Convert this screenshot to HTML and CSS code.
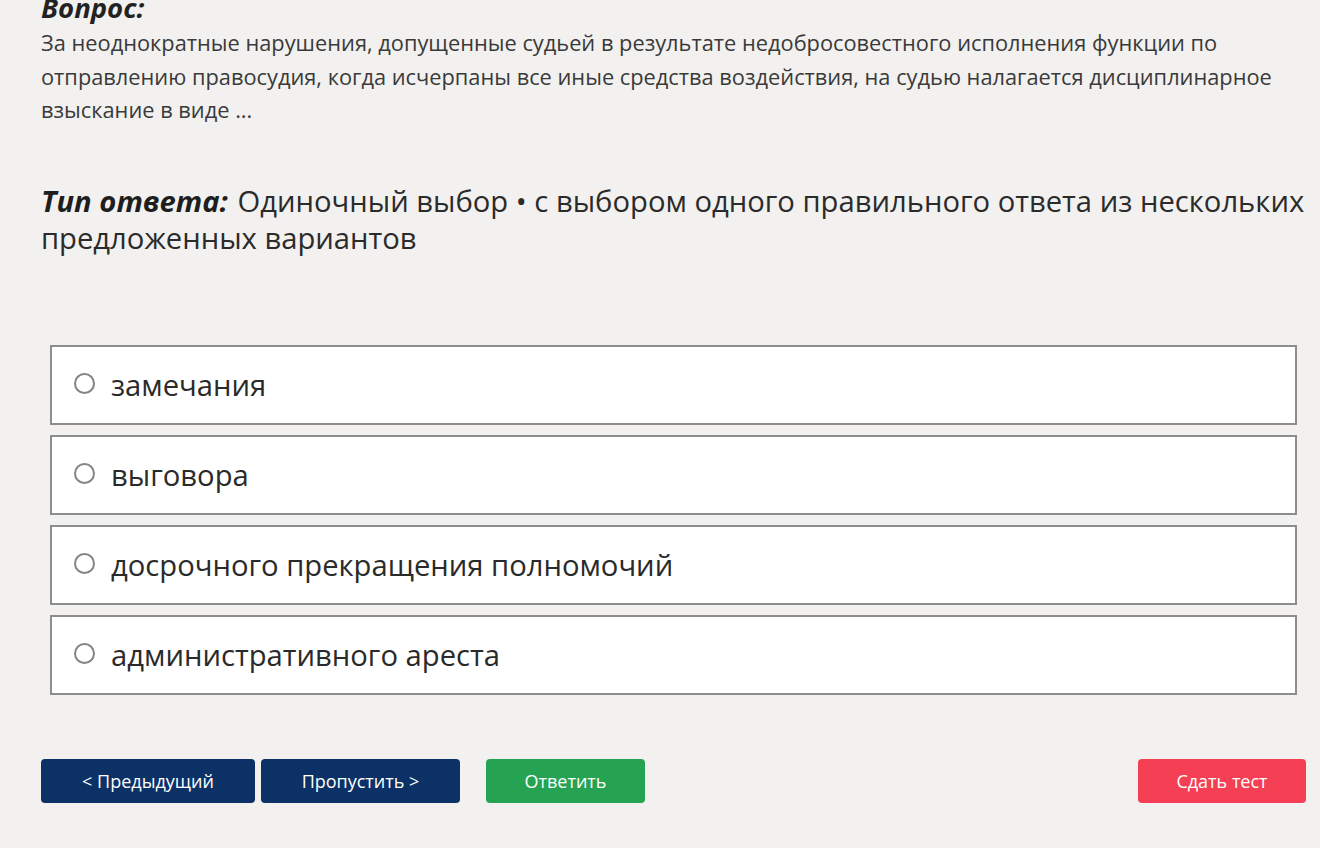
FILE: index.html
```html
<!DOCTYPE html>
<html>
    <head>
        <meta charset="utf-8">
        <title>Тест</title>
        <link rel="stylesheet" href="styles.css">
    </head>
    <body>
        <div class="page">
            <h2 class="q-title">Вопрос:</h2>
            <p class="q-text">За неоднократные нарушения, допущенные судьей в результате недобросовестного исполнения функции по отправлению правосудия, когда исчерпаны все иные средства воздействия, на судью налагается дисциплинарное взыскание в виде ...</p>

            <p class="q-type"><b><i>Тип ответа:</i></b> Одиночный выбор • с выбором одного правильного ответа из нескольких предложенных вариантов</p>

            <div class="answers">
                <label class="answer"><input type="radio" name="a"><span>замечания</span></label>
                <label class="answer"><input type="radio" name="a"><span>выговора</span></label>
                <label class="answer"><input type="radio" name="a"><span>досрочного прекращения полномочий</span></label>
                <label class="answer"><input type="radio" name="a"><span>административного ареста</span></label>
            </div>

            <div class="controls">
                <button class="btn btn-nav btn-prev">&lt; Предыдущий</button>
                <button class="btn btn-nav btn-skip">Пропустить &gt;</button>
                <button class="btn btn-ok">Ответить</button>
                <button class="btn btn-finish">Сдать тест</button>
            </div>
        </div>
    </body>
</html>
```

FILE: styles.css
```css
html, body {
    margin: 0;
    height: 100%;
    background: #f2f1ef;
}
.page {
    padding: 0 0 0 41px;
    font-family: "Open Sans", "Noto Sans", sans-serif;
    color: #2b2b2b;
}
.q-title {
    margin: -10px 0 0 0;
    font-size: 27.5px;
    line-height: 35px;
    font-style: italic;
    font-weight: 700;
    color: #222;
}
.q-text {
    margin: 1px 0 0 0;
    max-width: 1250px;
    font-size: 21.8px;
    line-height: 33.5px;
    color: #3a3a3a;
}
.q-type {
    margin: 56px 0 0 0;
    font-size: 29.2px;
    line-height: 37px;
    color: #2b2b2b;
}
.q-type b {
    color: #1e1e1e;
    margin-right: 2px;
}
.answers {
    margin: 88px 23px 0 9px;
    display: flex;
    flex-direction: column;
    gap: 10px;
}
.answer {
    display: flex;
    align-items: center;
    height: 76px;
    background: #fff;
    border: 2px solid #8d8d8d;
    font-size: 29.2px;
    color: #2a2a2a;
}
.answer input {
    appearance: none;
    width: 21px;
    height: 21px;
    margin: 0 16px 0 22px;
    border: 2px solid #848484;
    border-radius: 50%;
    background: #fff;
    position: relative;
    top: -1px;
}
.controls {
    margin: 64px 14px 0 0;
    display: flex;
    align-items: center;
}
.btn {
    height: 44px;
    border: none;
    border-radius: 4px;
    font-family: "Open Sans", "Noto Sans", sans-serif;
    font-size: 18px;
    color: #fff;
    cursor: pointer;
}
.btn-nav {
    background: #0b3166;
}
.btn-prev {
    width: 214px;
}
.btn-skip {
    width: 199px;
    margin-left: 6px;
}
.btn-ok {
    width: 159px;
    margin-left: 26px;
    background: #26a352;
}
.btn-finish {
    width: 168px;
    margin-left: auto;
    background: #f43f54;
}
```
